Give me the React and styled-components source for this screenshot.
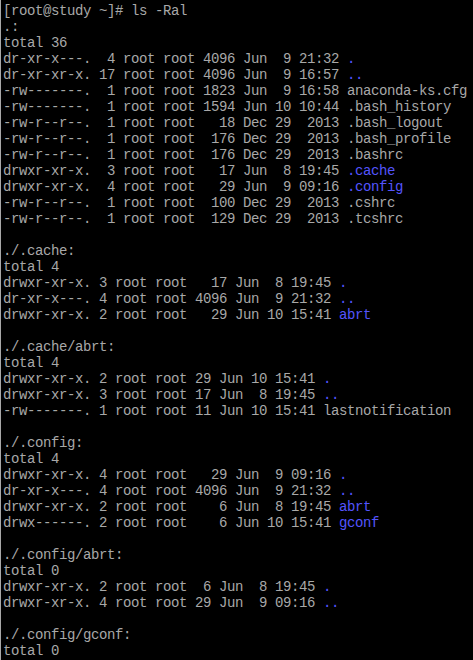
import React from "react";
import styled, { createGlobalStyle } from "styled-components";

const GlobalStyle = createGlobalStyle`
  html, body {
    margin: 0;
    padding: 0;
    background: #000;
  }
`;

const Screen = styled.div`
  width: 473px;
  height: 660px;
  box-sizing: border-box;
  background: #000;
  border-left: 1px solid #a8a8a8;
  padding: 3px 0 0 2px;
  overflow: hidden;
`;

const Line = styled.div`
  height: 16px;
  line-height: 16px;
  white-space: pre;
  font-family: "Liberation Mono", "DejaVu Sans Mono", monospace;
  font-size: 14px;
  letter-spacing: -0.4px;
  color: #a8a8a8;
`;

const Name = styled.span`
  color: ${(p) => (p.$dir ? "#5454fc" : "#a8a8a8")};
`;

// [prefix, name, isDir]
const lines = [
  ["[root@study ~]# ls -Ral"],
  [".:"],
  ["total 36"],
  ["dr-xr-x---.  4 root root 4096 Jun  9 21:32 ", ".", true],
  ["dr-xr-xr-x. 17 root root 4096 Jun  9 16:57 ", "..", true],
  ["-rw-------.  1 root root 1823 Jun  9 16:58 anaconda-ks.cfg"],
  ["-rw-------.  1 root root 1594 Jun 10 10:44 .bash_history"],
  ["-rw-r--r--.  1 root root   18 Dec 29  2013 .bash_logout"],
  ["-rw-r--r--.  1 root root  176 Dec 29  2013 .bash_profile"],
  ["-rw-r--r--.  1 root root  176 Dec 29  2013 .bashrc"],
  ["drwxr-xr-x.  3 root root   17 Jun  8 19:45 ", ".cache", true],
  ["drwxr-xr-x.  4 root root   29 Jun  9 09:16 ", ".config", true],
  ["-rw-r--r--.  1 root root  100 Dec 29  2013 .cshrc"],
  ["-rw-r--r--.  1 root root  129 Dec 29  2013 .tcshrc"],
  [""],
  ["./.cache:"],
  ["total 4"],
  ["drwxr-xr-x. 3 root root   17 Jun  8 19:45 ", ".", true],
  ["dr-xr-x---. 4 root root 4096 Jun  9 21:32 ", "..", true],
  ["drwxr-xr-x. 2 root root   29 Jun 10 15:41 ", "abrt", true],
  [""],
  ["./.cache/abrt:"],
  ["total 4"],
  ["drwxr-xr-x. 2 root root 29 Jun 10 15:41 ", ".", true],
  ["drwxr-xr-x. 3 root root 17 Jun  8 19:45 ", "..", true],
  ["-rw-------. 1 root root 11 Jun 10 15:41 lastnotification"],
  [""],
  ["./.config:"],
  ["total 4"],
  ["drwxr-xr-x. 4 root root   29 Jun  9 09:16 ", ".", true],
  ["dr-xr-x---. 4 root root 4096 Jun  9 21:32 ", "..", true],
  ["drwxr-xr-x. 2 root root    6 Jun  8 19:45 ", "abrt", true],
  ["drwx------. 2 root root    6 Jun 10 15:41 ", "gconf", true],
  [""],
  ["./.config/abrt:"],
  ["total 0"],
  ["drwxr-xr-x. 2 root root  6 Jun  8 19:45 ", ".", true],
  ["drwxr-xr-x. 4 root root 29 Jun  9 09:16 ", "..", true],
  [""],
  ["./.config/gconf:"],
  ["total 0"],
];

export default function App() {
  return (
    <>
      <GlobalStyle />
      <Screen>
        {lines.map(([text, name, dir], i) => (
          <Line key={i}>
            {text}
            {name && <Name $dir={dir}>{name}</Name>}
          </Line>
        ))}
      </Screen>
    </>
  );
}
